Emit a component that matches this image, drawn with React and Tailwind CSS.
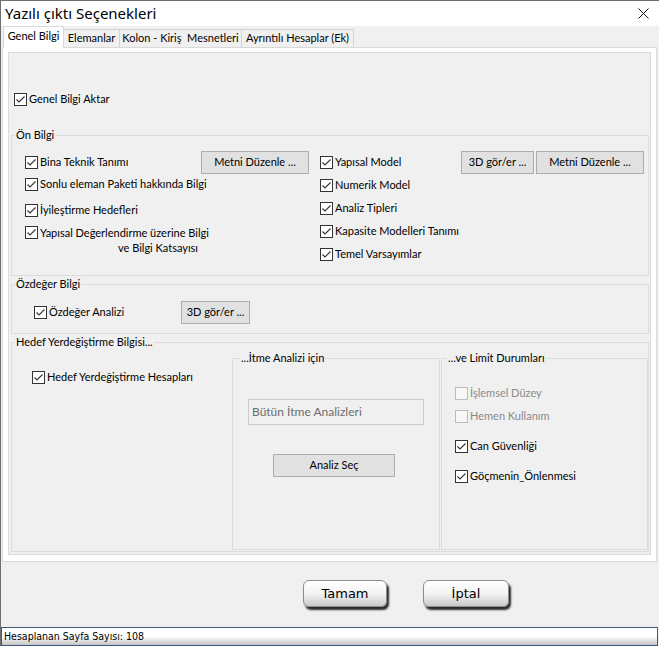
import React from "react";

const font = { fontFamily: 'Lato, "Noto Sans", "Liberation Sans", sans-serif' };

function Check({ checked = true, disabled = false, children, className = "" }) {
  return (
    <div className={`flex items-center ${className}`}>
      <div
        className={`w-[13px] h-[13px] shrink-0 border flex items-center justify-center ${
          disabled ? "border-[#bcbcbc] bg-[#f7f7f7]" : "border-[#333333] bg-white"
        }`}
      >
        {checked && (
          <svg width="11" height="11" viewBox="0 0 11 11">
            <polyline points="1.5,5.5 4,8 9.5,2.5" fill="none" stroke="#333" strokeWidth="1.1" />
          </svg>
        )}
      </div>
      <span className={`ml-[2px] whitespace-nowrap ${disabled ? "text-[#8a8a8a]" : "text-black"}`}>{children}</span>
    </div>
  );
}

function Btn({ children, className = "" }) {
  return (
    <div
      className={`h-[23px] shrink-0 border border-[#adadad] bg-[#e1e1e1] flex items-center justify-center whitespace-nowrap ${className}`}
    >
      {children}
    </div>
  );
}

function Group({ title, className = "", legendClass = "pl-[3px]", children }) {
  return (
    <fieldset className={`border border-[#dcdcdc] ${legendClass} ${className}`}>
      <legend className="px-[1px] leading-[14px]">{title}</legend>
      {children}
    </fieldset>
  );
}

function GlossyBtn({ children, className = "" }) {
  return (
    <div
      className={`h-[27px] rounded-[6px] border border-[#8c8c8c] bg-gradient-to-b from-white via-[#f3f3f3] to-[#c9c9c9] shadow-[2px_3px_2px_#2a2a2a] flex items-center justify-center text-[13px] text-black ${className}`}
      style={{ fontFamily: '"DejaVu Sans", "Liberation Sans", sans-serif' }}
    >
      {children}
    </div>
  );
}

export default function App() {
  return (
    <div
      className="w-[659px] h-[646px] bg-[#f0f0f0] border-t border-l border-[#6e6e6e] flex flex-col text-[11px] text-black overflow-hidden"
      style={font}
    >
      {/* Title bar */}
      <div className="h-[25px] shrink-0 bg-white flex items-center justify-between pl-[4px] pr-[10px]">
        <span className="text-[15px] leading-none" style={{ fontFamily: '"Noto Sans", sans-serif' }}>
          Yazılı çıktı Seçenekleri
        </span>
        <svg width="11" height="11" viewBox="0 0 11 11">
          <path d="M0.5 0.5L10.5 10.5M10.5 0.5L0.5 10.5" stroke="#111" strokeWidth="1" />
        </svg>
      </div>

      {/* Tabs */}
      <div className="h-[21px] shrink-0 flex items-end pl-[2px] relative z-10">
        <div className="w-[61px] h-[22px] -mb-[1px] bg-white border border-b-0 border-[#d9d9d9] flex items-center justify-center pb-[2px] whitespace-nowrap">
          Genel Bilgi
        </div>
        <div className="w-[56px] h-[18px] border-t border-r border-[#d4d4d4] flex items-center justify-center whitespace-nowrap overflow-hidden">
          Elemanlar
        </div>
        <div className="w-[122px] h-[18px] border-t border-r border-[#d4d4d4] flex items-center justify-center whitespace-pre overflow-hidden">
          Kolon - Kiriş  Mesnetleri
        </div>
        <div className="w-[112px] h-[18px] border-t border-r border-[#d4d4d4] flex items-center justify-center whitespace-nowrap overflow-hidden">
          Ayrıntılı Hesaplar (Ek)
        </div>
      </div>

      {/* Tab page */}
      <div className="ml-[1px] w-[655px] h-[515px] shrink-0 bg-white border border-[#d9d9d9] pt-[4px] pl-[5px] pr-[5px] pb-[6px]">
        <div className="h-full bg-[#f0f0f0] border border-[#dcdcdc] flex flex-col px-[2px]">
          <Check className="ml-[3px] mt-[39px] h-[14px]">Genel Bilgi Aktar</Check>

          {/* Ön Bilgi */}
          <Group title="Ön Bilgi" className="mt-[22px] h-[148px] w-[638px]">
            <div className="flex pt-[9px] pl-[10px]">
              <div className="w-[295px] flex flex-col">
                <div className="flex items-center h-[23px]">
                  <Check className="w-[176px]">Bina Teknik Tanımı</Check>
                  <Btn className="w-[108px]">Metni Düzenle ...</Btn>
                </div>
                <Check className="h-[21px]">Sonlu eleman Paketi hakkında Bilgi</Check>
                <Check className="h-[20px] mt-[5px]">İyileştirme Hedefleri</Check>
                <div className="flex items-start mt-[5px]">
                  <div className="mt-[1px]">
                    <Check checked>{""}</Check>
                  </div>
                  <div className="leading-[15px]">
                    <div>Yapısal Değerlendirme üzerine Bilgi</div>
                    <div className="pl-[78px]">ve Bilgi Katsayısı</div>
                  </div>
                </div>
              </div>
              <div className="flex flex-col">
                <div className="flex items-center h-[23px]">
                  <Check className="w-[141px]">Yapısal Model</Check>
                  <Btn className="w-[73px]">3D gör/er ...</Btn>
                  <Btn className="w-[108px] ml-[2px]">Metni Düzenle ...</Btn>
                </div>
                <Check className="h-[23px]">Numerik Model</Check>
                <Check className="h-[23px]">Analiz Tipleri</Check>
                <Check className="h-[23px]">Kapasite Modelleri Tanımı</Check>
                <Check className="h-[23px]">Temel Varsayımlar</Check>
              </div>
            </div>
          </Group>

          {/* Özdeğer Bilgi */}
          <Group title="Özdeğer Bilgi" className="mt-[1px] h-[57px] w-[638px]">
            <div className="flex items-center mt-[10px] pl-[19px]">
              <Check className="w-[147px]">Özdeğer Analizi</Check>
              <Btn className="w-[69px]">3D gör/er ...</Btn>
            </div>
          </Group>

          {/* Hedef Yerdeğiştirme Bilgisi */}
          <Group title="Hedef Yerdeğiştirme Bilgisi..." className="mt-[1px] h-[217px] w-[638px]">
            <div className="flex -ml-[3px]">
              <div className="w-[220px]">
                <Check className="ml-[20px] mt-[21px] h-[14px]">Hedef Yerdeğiştirme Hesapları</Check>
              </div>
              <Group title="...İtme Analizi için" className="w-[208px] h-[199px] mt-[2px]" legendClass="pl-[7px]">
                <div className="flex flex-col -ml-[7px]">
                  <div className="ml-[15px] mt-[34px] w-[176px] h-[26px] border border-[#cccccc] flex items-center pl-[3px] text-[#6d6d6d] text-[12px]">
                    Bütün İtme Analizleri
                  </div>
                  <Btn className="ml-[40px] mt-[29px] w-[122px]">Analiz Seç</Btn>
                </div>
              </Group>
              <Group title="...ve Limit Durumları" className="w-[207px] h-[199px] mt-[2px] ml-[1px]" legendClass="pl-[5px]">
                <div className="flex flex-col -ml-[5px] pl-[13px]">
                  <Check disabled checked={false} className="h-[20px] mt-[18px]">İşlemsel Düzey</Check>
                  <Check disabled checked={false} className="h-[20px] mt-[3px]">Hemen Kullanım</Check>
                  <Check className="h-[20px] mt-[10px]">Can Güvenliği</Check>
                  <Check className="h-[20px] mt-[10px]">Göçmenin_Önlenmesi</Check>
                </div>
              </Group>
            </div>
          </Group>
        </div>
      </div>

      {/* Bottom buttons */}
      <div className="h-[65px] shrink-0 flex items-start pl-[302px] pt-[18px] gap-[36px]">
        <GlossyBtn className="w-[84px]">Tamam</GlossyBtn>
        <GlossyBtn className="w-[86px]">İptal</GlossyBtn>
      </div>

      {/* Status bar */}
      <div
        className="h-[19px] shrink-0 w-[657px] border border-[#3d5a80] bg-gradient-to-b from-white via-white to-[#c4c4c4] flex items-center pl-[2px] text-[10.5px] text-black"
        style={{ fontFamily: '"DejaVu Sans Condensed", "Liberation Sans", sans-serif' }}
      >
        Hesaplanan Sayfa Sayısı: 108
      </div>
    </div>
  );
}
